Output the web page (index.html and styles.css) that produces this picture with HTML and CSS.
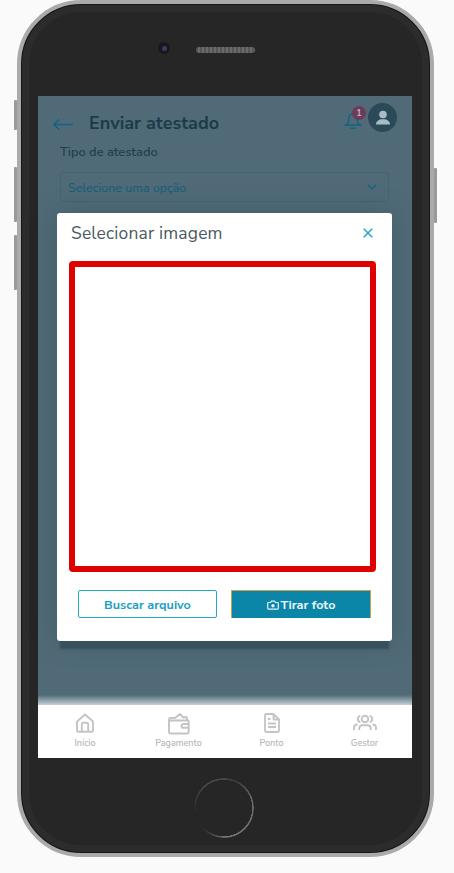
FILE: index.html
```html
<!DOCTYPE html>
<html lang="pt-BR">
<head>
<meta charset="utf-8">
<title>Enviar atestado</title>
<link rel="stylesheet" href="styles.css">
</head>
<body>
<div class="device">
  <span class="side-btn side-a"></span>
  <span class="side-btn side-b"></span>
  <span class="side-btn side-c"></span>
  <span class="side-btn side-d"></span>
  <div class="shell">
    <div class="top-bezel">
      <span class="camera"><span class="lens"></span></span>
      <span class="speaker"></span>
    </div>
    <div class="screen">
      <main class="main">
        <header class="header">
          <svg class="back" viewBox="0 0 24 14" width="22" height="13"><path d="M23 7H2M8 1.5 2 7l6 5.5" fill="none" stroke="#0f6480" stroke-width="1.6"/></svg>
          <h1 class="title">Enviar atestado</h1>
          <div class="header-icons">
            <span class="bell">
              <svg viewBox="0 0 20 20" width="20" height="20"><path d="M4 14.5c1.500-1.500 1.700-3 1.700-5.500 0-3 1.800-5.200 4.300-5.200S14.300 6 14.300 9c0 2.500.2 4 1.700 5.500M1.800 15h16.400M8 18.200h4" fill="none" stroke="#0f6480" stroke-width="1.500" stroke-linecap="round"/></svg>
              <span class="badge">1</span>
            </span>
            <span class="avatar">
              <svg viewBox="0 0 20 20" width="20" height="20"><circle cx="10" cy="6.500" r="3.800" fill="#a9bcc5"/><path d="M3 16.500c0-3.200 3-4.600 4.800-5.200h4.400c1.800.6 4.800 2 4.800 5.200z" fill="#a9bcc5"/></svg>
            </span>
          </div>
        </header>
        <div class="form">
          <div class="field-label">Tipo de atestado</div>
          <div class="select">
            <span>Selecione uma opção</span>
            <svg viewBox="0 0 10 6" width="10" height="6"><path d="M1 1l4 4 4-4" fill="none" stroke="#0f6480" stroke-width="1.100"/></svg>
          </div>
        </div>
      </main>
      <section class="modal">
        <div class="modal-head">
          <h2 class="modal-title">Selecionar imagem</h2>
          <svg class="close" viewBox="0 0 10 10" width="10" height="10"><path d="M.7.7l8.600 8.600M9.300.7.7 9.300" fill="none" stroke="#2aa3c6" stroke-width="1.500"/></svg>
        </div>
        <div class="frame"></div>
        <div class="actions">
          <button class="btn btn-outline">Buscar arquivo</button>
          <button class="btn btn-solid">
            <svg viewBox="0 0 12 10" width="12" height="10"><path d="M1.500 2.500h2l1-1.400h3l1 1.400h2a.8.8 0 0 1 .8.8v5a.8.8 0 0 1-.8.8h-9a.8.8 0 0 1-.8-.8v-5a.8.8 0 0 1 .8-.8z" fill="none" stroke="#e8f2f5" stroke-width="1.200"/><circle cx="6" cy="5.700" r="1.700" fill="#e8f2f5"/></svg>
            <span>Tirar foto</span>
          </button>
        </div>
      </section>
      <nav class="nav">
        <div class="nav-item">
          <svg viewBox="0 0 20 20" width="20" height="20"><path d="M2 8.500 10 1.500l8 7v9a1.200 1.200 0 0 1-1.200 1.200H3.200A1.200 1.200 0 0 1 2 17.500zM6.800 18.500v-7.200a1.500 1.500 0 0 1 1.500-1.500h3.400a1.500 1.500 0 0 1 1.500 1.500v7.200" fill="none" stroke="#c4c4c4" stroke-width="1.900" stroke-linejoin="round"/></svg>
          <span>Início</span>
        </div>
        <div class="nav-item">
          <svg viewBox="0 0 24 22" width="24" height="22"><path d="M2 7.500h18.500a1.200 1.200 0 0 1 1.200 1.200v10.600a1.200 1.200 0 0 1-1.200 1.200H3.200A1.200 1.200 0 0 1 2 19.300V6.500a1.500 1.500 0 0 1 1.500-1.500H8l5-4 3.200 3.500 3.300-.5 1 3.500M21.700 11h-5.200a1.800 1.800 0 0 0 0 3.800h5.200" fill="none" stroke="#c4c4c4" stroke-width="1.900" stroke-linejoin="round"/></svg>
          <span>Pagamento</span>
        </div>
        <div class="nav-item">
          <svg viewBox="0 0 20 20" width="20" height="20"><path d="M3 2.200A1.200 1.200 0 0 1 4.200 1h7.300L17 6.500v11.300a1.200 1.200 0 0 1-1.200 1.200H4.200A1.200 1.200 0 0 1 3 17.800zM11.500 1v5.500H17M6 6h2.500M6 10.500h8M6 14h8" fill="none" stroke="#c4c4c4" stroke-width="1.800" stroke-linejoin="round"/></svg>
          <span>Ponto</span>
        </div>
        <div class="nav-item">
          <svg viewBox="0 0 24 20" width="24" height="20"><circle cx="12" cy="6" r="3.300" fill="none" stroke="#c4c4c4" stroke-width="1.900"/><path d="M7.300 2.800a3.300 3.300 0 0 0 0 6.400M16.700 2.800a3.300 3.300 0 0 1 0 6.400M1 17v-2.500c0-2 1.500-3 3.500-3M23 17v-2.500c0-2-1.500-3-3.500-3M6.200 17v-1.500c0-2 1.500-3.300 3.500-3.300h4.600c2 0 3.500 1.300 3.500 3.300V17" fill="none" stroke="#c4c4c4" stroke-width="1.900"/></svg>
          <span>Gestor</span>
        </div>
      </nav>
    </div>
    <div class="bottom-bezel">
      <span class="home"></span>
    </div>
  </div>
</div>
</body>
</html>
```
FILE: styles.css
```css
* { box-sizing: border-box; }
html, body { margin: 0; height: 100%; }
body {
  background: #fafafa;
  font-family: "Nunito Sans", "Noto Sans", "Open Sans", sans-serif;
  overflow: hidden;
  padding-left: 17px;
}
.device { position: relative; width: 417px; height: 857px; }
.side-btn { position: absolute; width: 3px; background: #9a9a9a; border-radius: 1px; }
.side-a { left: -3px; top: 100px; height: 30px; }
.side-b { left: -3px; top: 167px; height: 55px; }
.side-c { left: -3px; top: 235px; height: 55px; }
.side-d { right: -3px; top: 168px; height: 55px; }
.shell {
  position: relative;
  height: 857px;
  border-radius: 64px;
  border: 4px solid #aaaaaa;
  background: #262626;
  box-shadow: inset 0 0 0 1px #161616, inset 0 0 0 8px #2c2c2c;
  display: flex;
  flex-direction: column;
  padding: 0 18px 0 17px;
}
.top-bezel { height: 92px; flex: none; display: flex; align-items: flex-start; justify-content: flex-start; gap: 26px; padding: 37px 0 0 120px; }
.camera { width: 12px; height: 12px; margin-top: 1px; border-radius: 50%; background: #181818; display: flex; align-items: center; justify-content: center; }
.lens { width: 5px; height: 5px; border-radius: 50%; background: #43366a; }
.speaker {
  width: 59px;
  height: 6px;
  margin-top: 6px;
  border-radius: 3px;
  background: repeating-linear-gradient(90deg, #555 0 2px, #6a6a6a 2px 4px);
}
.screen { position: relative; height: 662px; flex: none; background: #fff; display: flex; flex-direction: column; }
.main {
  flex: 1;
  background: linear-gradient(to bottom, #506b77 0, #506b77 calc(100% - 10px), #c5d0d6 100%);
}
.nav {
  height: 53px;
  flex: none;
  display: grid;
  grid-template-columns: 94px 93px 93px 93px;
  padding-top: 8px;
  background: #fff;
}
.nav-item { display: flex; flex-direction: column; align-items: center; height: 36px; justify-content: space-between; font-size: 9px; font-weight: 600; color: #b8b8b8; }
.header { display: flex; align-items: flex-start; height: 48px; padding: 7px 15px 0 14px; position: relative; }
.back { margin-top: 15px; }
.title { margin: 8px 0 0 15px; font-size: 18px; font-weight: 700; line-height: 24px; color: #1b3b4b; }
.header-icons { margin-left: auto; display: flex; align-items: flex-start; }
.bell { position: relative; width: 25px; height: 24px; margin-top: 7px; }
.badge {
  position: absolute;
  left: 9px;
  top: -4px;
  width: 14px;
  height: 14px;
  border-radius: 50%;
  background: #6f3a58;
  color: #a9bcc5;
  font-size: 9px;
  font-weight: 700;
  line-height: 14px;
  text-align: center;
}
.avatar { width: 29px; height: 29px; border-radius: 50%; background: #2b4a59; display: flex; align-items: center; justify-content: center; }
.form { padding: 0 23px 0 22px; }
.field-label { font-size: 12.8px; font-weight: 600; line-height: 16px; color: #21404f; margin-bottom: 12px; }
.select {
  height: 30px;
  border: 1px solid #45646f;
  border-radius: 3px;
  padding: 0 11px 0 7px;
  display: flex;
  align-items: center;
  justify-content: space-between;
  font-size: 12.5px;
  color: #125f79;
}
.modal {
  position: absolute;
  left: 19px;
  top: 117px;
  width: 335px;
  height: 428px;
  background: #fff;
  border-radius: 3px;
  box-shadow: 0 11px 2px -3px #36515d, 0 0 24px rgba(40, 65, 78, .35);
  padding: 0 12px;
}
.modal-head { height: 48px; padding: 0 7px 8px 2px; display: flex; align-items: center; justify-content: space-between; }
.modal-title { margin: 0; font-size: 17.4px; font-weight: 400; color: #4b5a62; letter-spacing: .2px; }
.frame { height: 311px; width: 307px; border: 6px solid #e00000; border-radius: 4px; background: #fff; }
.actions { display: flex; gap: 14px; padding: 18px 9px 0; }
.btn {
  width: 139px;
  height: 28px;
  border-radius: 2px;
  font-family: inherit;
  font-size: 12.6px;
  font-weight: 700;
  padding: 0;
  display: flex;
  align-items: center;
  justify-content: center;
  gap: 2px;
}
.btn-outline { background: #fff; border: 1px solid #22a8c9; color: #22a0c2; }
.btn-solid { width: 140px; background: #0b86a8; border: 1px solid #c5a44a; border-bottom: 0; color: #eef6f8; border-radius: 0; }
.bottom-bezel { flex: 1; display: flex; justify-content: center; padding-top: 20px; padding-right: 2px; }
.home {
  width: 60px;
  height: 60px;
  border-radius: 50%;
  background: conic-gradient(#4a4a4a 0, #3a3a3a 6%, #6a6a6a 20%, #7a7a7a 48%, #2a2a2a 62%, #262626 72%, #4a4a4a 88%, #4a4a4a 100%);
  -webkit-mask: radial-gradient(circle closest-side, transparent 28px, #000 28.5px);
  mask: radial-gradient(circle closest-side, transparent 28px, #000 28.5px);
}
```
